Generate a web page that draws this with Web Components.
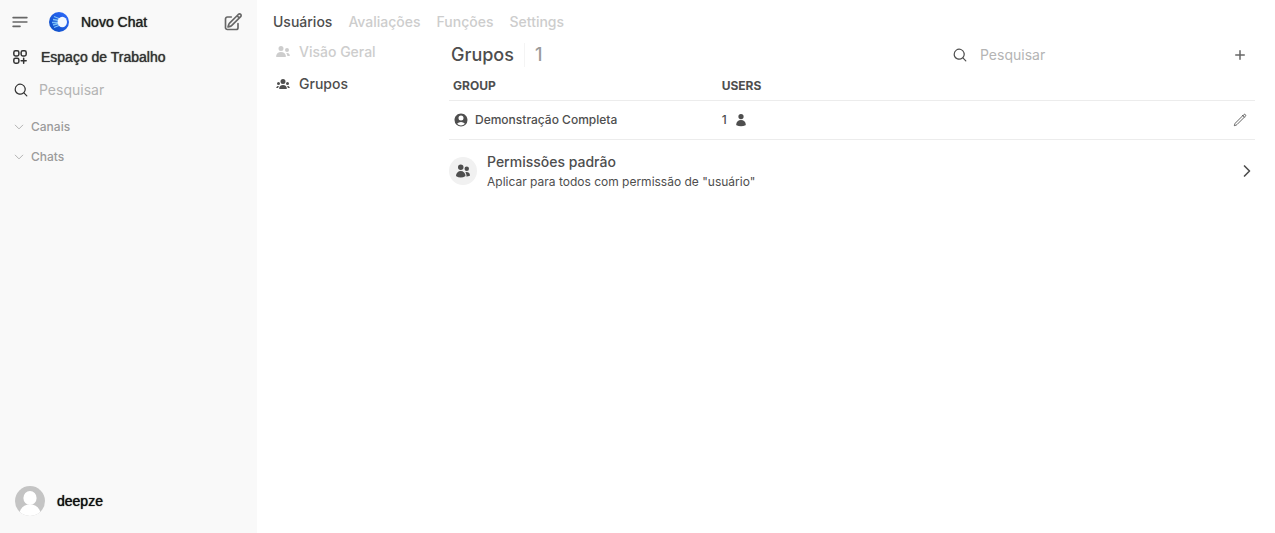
<!DOCTYPE html>
<html lang="pt-BR">
<head>
<meta charset="utf-8">
<meta name="viewport" content="width=device-width, initial-scale=1">
<title>Grupos</title>
<style>
html, body { margin: 0; min-height: 100vh; }
body { font-family: Inter, "Noto Sans", sans-serif; font-size: 14px; line-height: 20px; color: #4e4e4e; background: #fff; }
</style>
</head>
<body>
<admin-app></admin-app>
<script>
const ICONS = {
  menu: ['line', 24, 2, 'M3.75 6.75h16.5M3.75 12h16.5m-16.5 5.25H12'],
  compose: ['line', 24, 2, 'm16.862 4.487 1.687-1.688a1.875 1.875 0 1 1 2.652 2.652L10.582 16.07a4.5 4.5 0 0 1-1.897 1.13L6 18l.8-2.685a4.5 4.5 0 0 1 1.13-1.897l8.932-8.931Zm0 0L19.5 7.125M18 14v4.75A2.25 2.25 0 0 1 15.75 21H5.25A2.25 2.25 0 0 1 3 18.75V8.25A2.25 2.25 0 0 1 5.25 6H10'],
  workspace: ['line', 24, 2, 'M13.5 16.875h3.375m0 0h3.375m-3.375 0V13.5m0 3.375v3.375M6 10.5h2.25a2.25 2.25 0 0 0 2.25-2.25V6a2.25 2.25 0 0 0-2.25-2.25H6A2.25 2.25 0 0 0 3.75 6v2.25A2.25 2.25 0 0 0 6 10.5Zm0 9.75h2.25A2.25 2.25 0 0 0 10.5 18v-2.25a2.25 2.25 0 0 0-2.25-2.25H6a2.25 2.25 0 0 0-2.25 2.25V18A2.25 2.25 0 0 0 6 20.25Zm9.75-9.75H18a2.25 2.25 0 0 0 2.25-2.25V6A2.25 2.25 0 0 0 18 3.75h-2.25A2.25 2.25 0 0 0 13.5 6v2.25a2.25 2.25 0 0 0 2.25 2.25Z'],
  search: ['fill', 20, 0, 'M9 3.5a5.5 5.5 0 1 0 0 11 5.5 5.5 0 0 0 0-11ZM2 9a7 7 0 1 1 12.452 4.391l3.328 3.329a.75.75 0 1 1-1.06 1.06l-3.329-3.328A7 7 0 0 1 2 9Z'],
  down: ['line', 24, 2, 'm19.5 8.25-7.5 7.5-7.5-7.5'],
  users16: ['fill', 16, 0, 'M8.5 4.5a2.5 2.5 0 1 1-5 0 2.5 2.5 0 0 1 5 0ZM10.9 12.006c.11.542-.348.994-.9.994H2c-.553 0-1.01-.452-.902-.994a5.002 5.002 0 0 1 9.803 0ZM14.002 12h-1.59a2.556 2.556 0 0 0-.04-.29 6.476 6.476 0 0 0-1.167-2.603 3.002 3.002 0 0 1 3.633 1.911c.18.522-.283.982-.836.982ZM12 8a2 2 0 1 0 0-4 2 2 0 0 0 0 4Z'],
  group: ['fill', 16, 0, 'M8 8a2.5 2.5 0 1 0 0-5 2.5 2.5 0 0 0 0 5ZM3.156 11.763c.16-.629.44-1.21.813-1.72a2.5 2.5 0 0 0-2.725 1.377c-.136.287.102.58.418.58h1.449c.01-.077.025-.156.045-.237ZM12.847 11.763c.02.08.036.16.046.237h1.446c.316 0 .554-.293.417-.579a2.5 2.5 0 0 0-2.722-1.378c.374.51.653 1.09.813 1.72ZM14 7.5a1.5 1.5 0 1 1-3 0 1.5 1.5 0 0 1 3 0ZM3.5 9a1.5 1.5 0 1 0 0-3 1.5 1.5 0 0 0 0 3ZM5 13c-.552 0-1.013-.455-.876-.99a4.002 4.002 0 0 1 7.753 0c.136.535-.324.99-.877.99H5Z'],
  circle: ['fill', 24, 0, 'M18.685 19.097A9.723 9.723 0 0 0 21.75 12c0-5.385-4.365-9.75-9.75-9.75S2.25 6.615 2.25 12a9.723 9.723 0 0 0 3.065 7.097A9.716 9.716 0 0 0 12 21.75a9.716 9.716 0 0 0 6.685-2.653Zm-12.54-1.285A7.486 7.486 0 0 1 12 15a7.486 7.486 0 0 1 5.855 2.812A8.224 8.224 0 0 1 12 20.25a8.224 8.224 0 0 1-5.855-2.438ZM15.75 9a3.75 3.75 0 1 1-7.5 0 3.75 3.75 0 0 1 7.5 0Z'],
  user: ['fill', 24, 0, 'M7.5 6a4.5 4.5 0 1 1 9 0 4.5 4.5 0 0 1-9 0ZM3.751 20.105a8.25 8.25 0 0 1 16.498 0 .75.75 0 0 1-.437.695A18.683 18.683 0 0 1 12 22.5c-2.786 0-5.433-.608-7.812-1.7a.75.75 0 0 1-.437-.695Z'],
  users: ['fill', 24, 0, 'M4.5 6.375a4.125 4.125 0 1 1 8.25 0 4.125 4.125 0 0 1-8.25 0ZM14.25 8.625a3.375 3.375 0 1 1 6.75 0 3.375 3.375 0 0 1-6.75 0ZM1.5 19.125a7.125 7.125 0 0 1 14.25 0v.003l-.001.119a.75.75 0 0 1-.363.63 13.067 13.067 0 0 1-6.761 1.873c-2.472 0-4.786-.684-6.76-1.873a.75.75 0 0 1-.364-.63l-.001-.122ZM17.25 19.128l-.001.144a2.25 2.25 0 0 1-.233.96 10.088 10.088 0 0 0 5.06-1.01.75.75 0 0 0 .42-.643 4.875 4.875 0 0 0-6.957-4.611 8.586 8.586 0 0 1 1.71 5.157v.003Z'],
  plus: ['fill', 16, 0, 'M8.75 3.75a.75.75 0 0 0-1.5 0v3.5h-3.5a.75.75 0 0 0 0 1.5h3.5v3.5a.75.75 0 0 0 1.5 0v-3.5h3.5a.75.75 0 0 0 0-1.5h-3.5v-3.5Z'],
  pencil: ['line', 24, 1.5, 'm16.862 4.487 1.687-1.688a1.875 1.875 0 1 1 2.652 2.652L6.832 19.82a4.5 4.5 0 0 1-1.897 1.13l-2.685.8.8-2.685a4.5 4.5 0 0 1 1.13-1.897L16.863 4.487Zm0 0L19.5 7.125'],
  right: ['line', 24, 2.5, 'm8.25 4.5 7.5 7.5-7.5 7.5']
};

const RESET = `
*, *::before, *::after { box-sizing: border-box; }
a { color: inherit; text-decoration: none; }
button { font: inherit; color: inherit; background: none; border: 0; padding: 0; margin: 0; text-align: left; cursor: pointer; }
h1, h2, p, ul { margin: 0; padding: 0; font: inherit; list-style: none; }
`;

function define(name, css, html) {
  customElements.define(name, class extends HTMLElement {
    constructor() {
      super();
      const t = document.createElement('template');
      t.innerHTML = `<style>${RESET}${css}</style>${html}`;
      this.attachShadow({ mode: 'open' }).append(t.content.cloneNode(true));
    }
  });
}

class UiIcon extends HTMLElement {
  connectedCallback() {
    if (this.shadowRoot) return;
    const [kind, box, width, d] = ICONS[this.getAttribute('name')];
    const size = this.getAttribute('size') || 16;
    const paint = kind === 'line'
      ? `fill="none" stroke="currentColor" stroke-width="${width}" stroke-linecap="round" stroke-linejoin="round"`
      : 'fill="currentColor" fill-rule="evenodd"';
    this.attachShadow({ mode: 'open' }).innerHTML =
      `<style>:host { display: block; flex: none; } svg { display: block; }</style>
       <svg aria-hidden="true" width="${size}" height="${size}" viewBox="0 0 ${box} ${box}" ${paint}><path d="${d}"/></svg>`;
  }
}
customElements.define('ui-icon', UiIcon);

class SearchField extends HTMLElement {
  connectedCallback() {
    if (this.shadowRoot) return;
    this.attachShadow({ mode: 'open' }).innerHTML = `<style>${RESET}
      :host { display: flex; align-items: center; min-width: 0; gap: var(--search-gap, 12px); }
      label { display: flex; flex: none; }
      input { flex: 1; min-width: 0; width: 100%; height: 20px; margin: 0; padding: 0; border: 0; outline: 0; background: transparent; font: inherit; color: inherit; }
      input::placeholder { color: #b4b4b4; opacity: 1; }
    </style><label for="q" aria-label="Pesquisar"><ui-icon name="search"></ui-icon></label>
    <input id="q" type="text" placeholder="Pesquisar">`;
  }
}
customElements.define('search-field', SearchField);

define('brand-logo', ':host { display: block; flex: none; } svg { display: block; }', `
<svg width="20" height="20" viewBox="0 0 20 20" aria-hidden="true">
  <defs><linearGradient id="g" x1="1" y1="0" x2="0" y2="1"><stop offset="0" stop-color="#2f6bff"/><stop offset="1" stop-color="#0a4cc0"/></linearGradient></defs>
  <circle cx="10" cy="10" r="10" fill="url(#g)"/>
  <path d="M5 4.500 10 6.500M4 7.500 10 8.500M3 10.500H10M4 13 10 11.500M5 15.500 10 13.500" stroke="#7cc0f6" stroke-width="1.300" fill="none"/>
  <ellipse cx="13.300" cy="10" rx="4.700" ry="5.300" fill="#f2f8ff"/>
</svg>`);

define('user-avatar', ':host { display: block; flex: none; } svg { display: block; border-radius: 50%; }', `
<svg width="30" height="30" viewBox="0 0 30 30" aria-hidden="true">
  <rect width="30" height="30" fill="#c4c4c4"/>
  <ellipse cx="15" cy="12" rx="6.600" ry="7" fill="#fff"/>
  <path d="M4 30C4.500 22 9 18.500 15 18.500S25.500 22 26 30Z" fill="#fff"/>
</svg>`);

define('side-section', `
:host { display: block; }
button { display: flex; align-items: center; gap: 6px; width: 100%; height: 30px; padding-left: 13px; font-size: 12px; line-height: 18px; font-weight: 500; color: #9b9b9b; }
ui-icon { color: #b4b4b4; }
`, `<button type="button" aria-expanded="true"><ui-icon name="down" size="12"></ui-icon><slot></slot></button>`);

define('app-sidebar', `
:host { display: flex; flex-direction: column; flex: none; width: 257px; min-height: 100vh; background: #f9f9f9; color: #333; padding: 5px 0 12px; }
.row { display: flex; align-items: center; height: 34px; }
.brand { font-family: "Liberation Sans", Arial, sans-serif; text-shadow: 0 0 1px currentColor; }
.top { padding: 0 14px 0 10px; }
.top a { display: flex; align-items: center; gap: 12px; flex: 1; margin-left: 19px; color: #212121; }
.grey { color: #676767; }
.work { gap: 12px; padding-left: 11px; margin-top: 1px; }
search-field { height: 32px; padding: 0 16px 0 13px; --search-gap: 10px; }
.sections { margin-top: 6px; flex: 1; }
.user { gap: 12px; width: 100%; height: 40px; padding-left: 15px; color: #0d0d0d; }
`, `
<div class="row top">
  <button class="grey" type="button" aria-label="Menu"><ui-icon name="menu" size="20"></ui-icon></button>
  <a class="brand" href="#chat"><brand-logo></brand-logo><span>Novo Chat</span></a>
  <button class="grey" type="button" aria-label="Novo Chat"><ui-icon name="compose" size="20"></ui-icon></button>
</div>
<a class="row work brand" href="#workspace"><ui-icon name="workspace" size="18"></ui-icon><span>Espaço de Trabalho</span></a>
<search-field></search-field>
<div class="sections"><side-section>Canais</side-section><side-section>Chats</side-section></div>
<button class="row user brand" type="button"><user-avatar></user-avatar><span>deepze</span></button>`);

define('tab-bar', `
:host { display: block; }
nav { display: flex; gap: 16px; padding: 8px 16px 0; height: 36px; line-height: 28px; font-weight: 500; color: #cdcdcd; }
[aria-current] { color: #4e4e4e; }
`, `<nav><a href="#users" aria-current="page">Usuários</a><a href="#evaluations">Avaliações</a><a href="#functions">Funções</a><a href="#settings">Settings</a></nav>`);

define('side-nav', `
:host { display: block; flex: none; width: 192px; }
nav { display: flex; flex-direction: column; padding-left: 18px; font-weight: 500; color: #cdcdcd; }
a { display: flex; align-items: center; gap: 8px; height: 32px; }
[aria-current] { color: #4e4e4e; }
`, `<nav><a href="#overview"><ui-icon name="users16"></ui-icon>Visão Geral</a><a href="#groups" aria-current="page"><ui-icon name="group"></ui-icon>Grupos</a></nav>`);

define('groups-header', `
:host { display: flex; align-items: center; box-sizing: border-box; height: 36px; padding: 2px 7px 0 2px; }
h1 { font-size: 18px; line-height: 28px; font-weight: 500; }
i { width: 1px; height: 24px; margin: 0 10px; background: #f4f4f4; }
.count { font-size: 18px; line-height: 28px; font-weight: 500; color: #9b9b9b; }
search-field { width: 272px; margin-left: auto; }
button { margin-left: 8px; color: #676767; }
`, `<h1>Grupos</h1><i></i><span class="count">1</span>
<search-field></search-field>
<button type="button" aria-label="Adicionar grupo"><ui-icon name="plus"></ui-icon></button>`);

define('groups-table', `
:host { display: block; font-size: 12px; line-height: 16px; }
table { width: 100%; border-collapse: collapse; table-layout: fixed; font-weight: 500; }
th { height: 28px; padding: 0 4px; text-align: left; font-weight: 700; }
td { height: 39px; padding: 0 4px; }
tr { border-bottom: 1px solid #ececec; }
.cell { display: flex; align-items: center; gap: 6px; }
.count { gap: 7px; }
.end { justify-content: flex-end; padding-right: 4px; }
`, `<table><thead><tr><th scope="col">GROUP</th><th scope="col">USERS</th><th aria-label="Ações"></th></tr></thead>
<tbody><tr><td><div class="cell"><ui-icon name="circle"></ui-icon>Demonstração Completa</div></td>
<td><div class="cell count"><span>1</span><ui-icon name="user" size="14"></ui-icon></div></td>
<td><div class="cell end"><button type="button" aria-label="Editar"><ui-icon name="pencil" size="14"></ui-icon></button></div></td></tr></tbody></table>`);

define('default-permissions', `
:host { display: block; }
button { display: flex; align-items: center; gap: 10px; width: 100%; padding: 12px 0; }
.badge { display: flex; align-items: center; justify-content: center; width: 28px; height: 28px; border-radius: 50%; background: #f1f1f1; flex: none; }
.text { flex: 1; display: grid; gap: 2px; }
.title { font-weight: 500; }
.note { font-size: 12px; line-height: 16px; }
`, `<button type="button"><span class="badge"><ui-icon name="users"></ui-icon></span>
<span class="text"><span class="title">Permissões padrão</span><span class="note">Aplicar para todos com permissão de "usuário"</span></span>
<ui-icon name="right"></ui-icon></button>`);

define('admin-app', `
:host { display: flex; min-height: 100vh; }
main { flex: 1; min-width: 0; }
.body { display: flex; padding-right: 20px; }
.panel { flex: 1; min-width: 0; }
`, `<app-sidebar></app-sidebar>
<main><tab-bar></tab-bar><div class="body"><side-nav></side-nav>
<section class="panel"><groups-header></groups-header><groups-table></groups-table><default-permissions></default-permissions></section></div></main>`);
</script>
</body>
</html>
